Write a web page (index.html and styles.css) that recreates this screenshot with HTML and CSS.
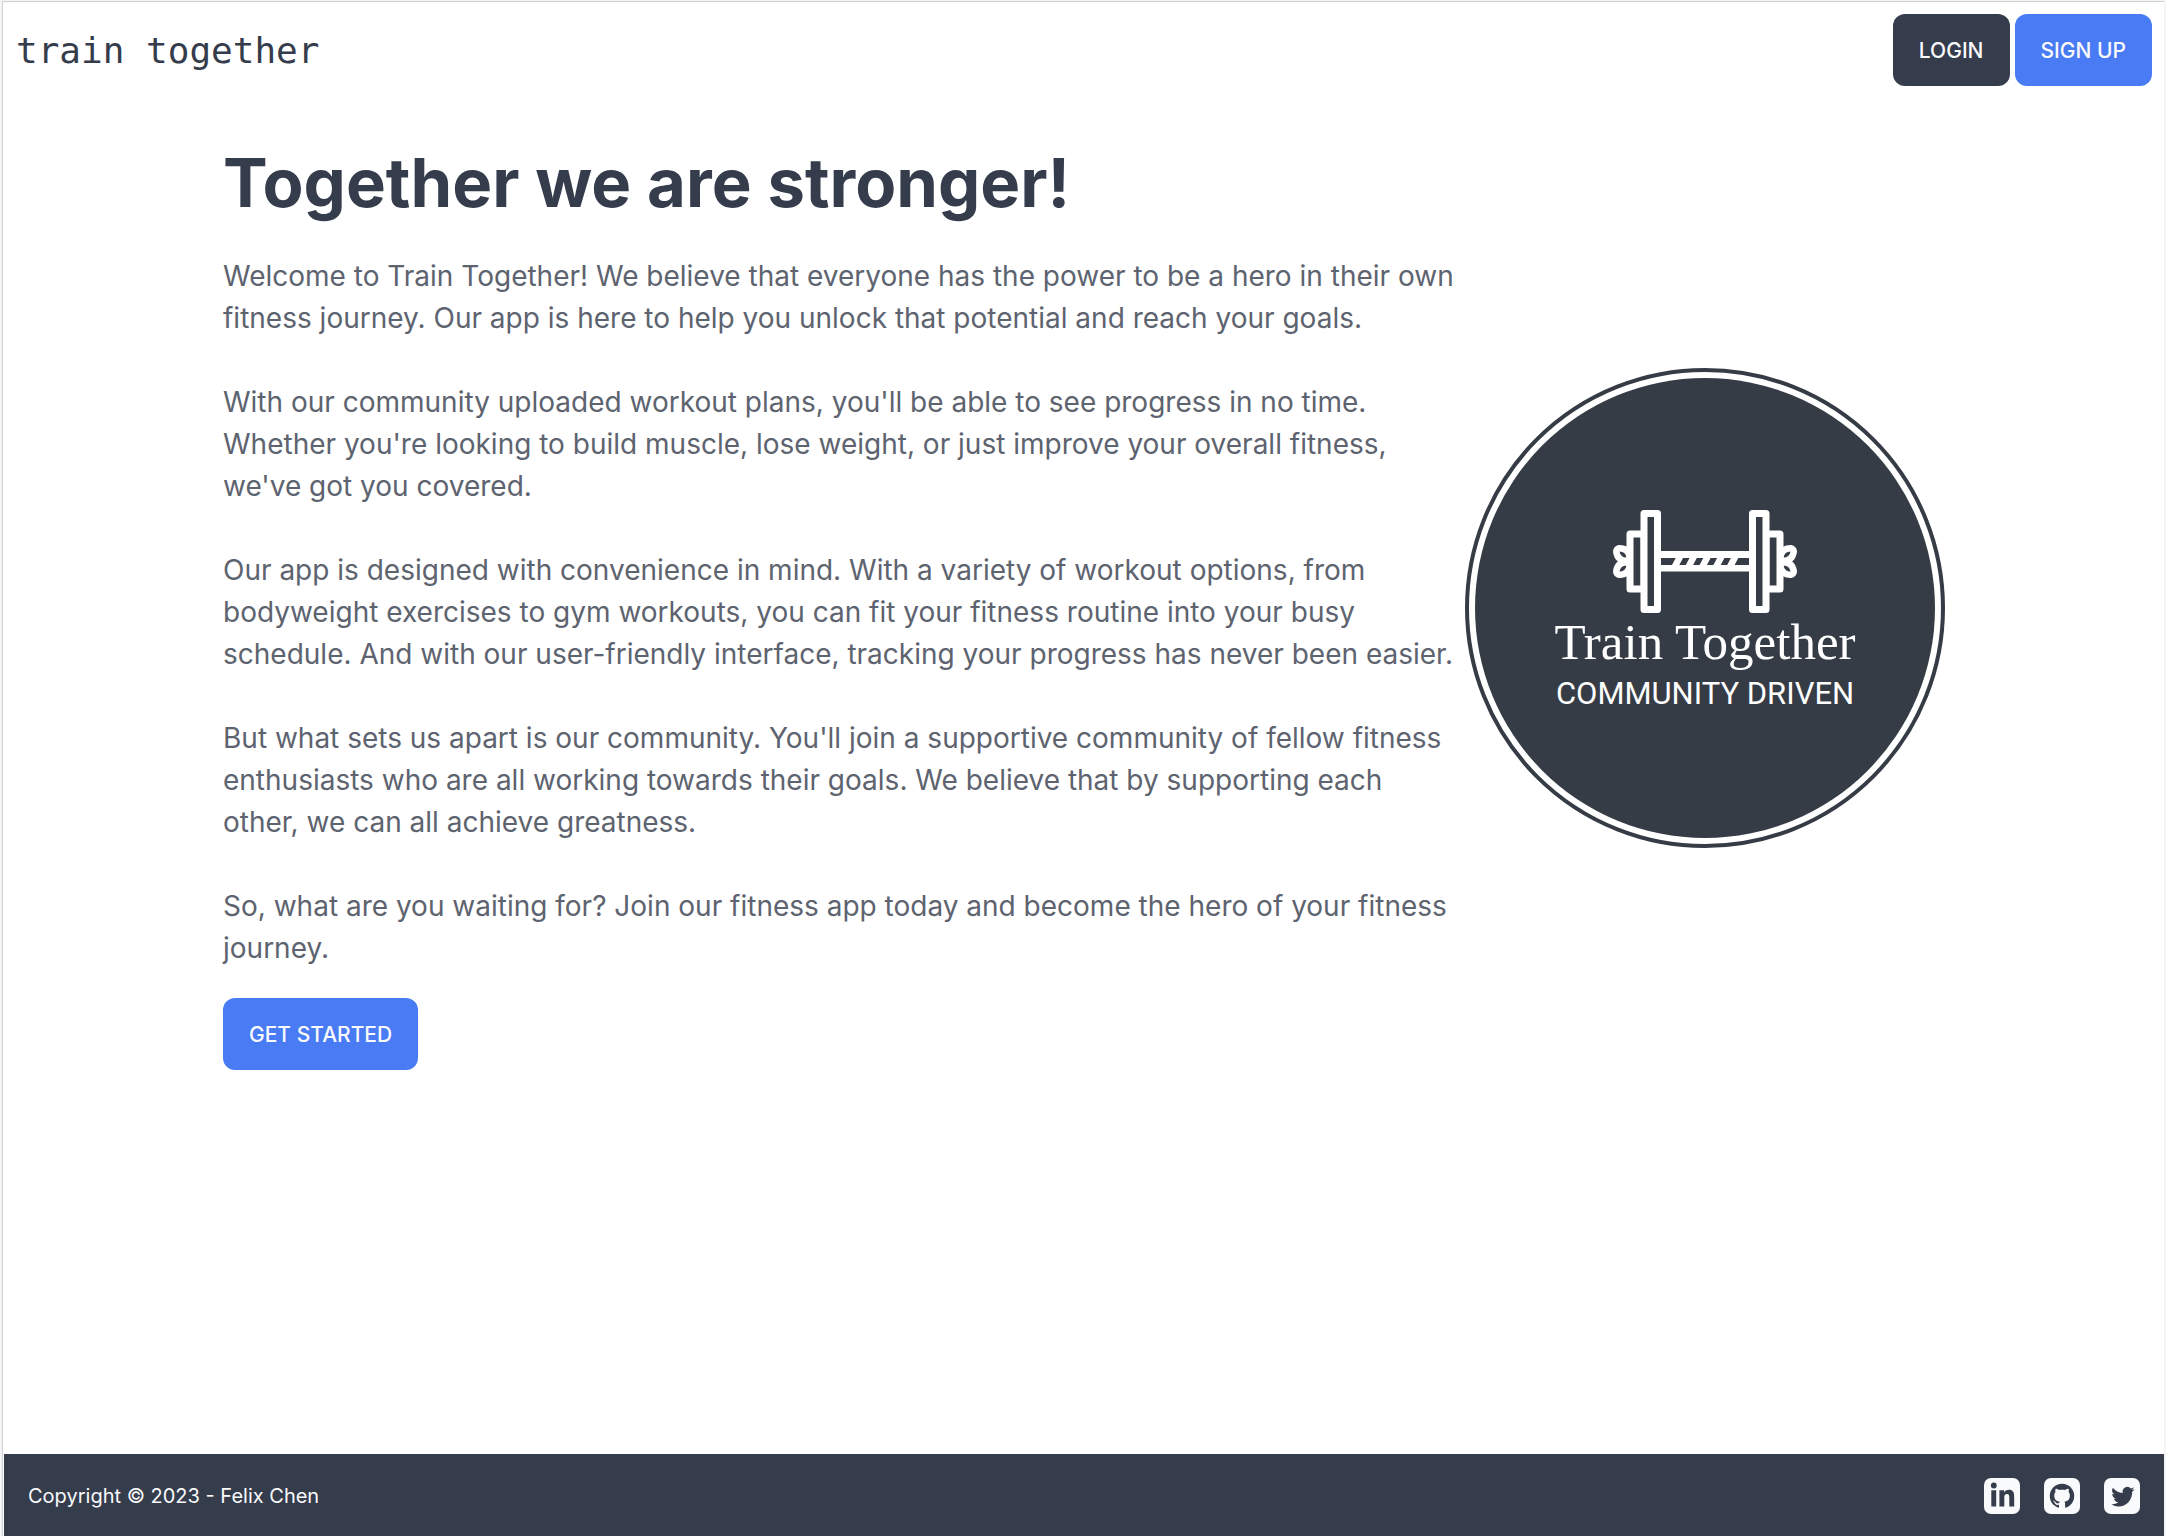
FILE: index.html
```html
<!DOCTYPE html>
<html lang="en">
<head>
  <meta charset="utf-8">
  <meta name="viewport" content="width=device-width, initial-scale=1">
  <title>Train Together</title>
  <link rel="stylesheet" href="styles.css">
</head>
<body>
  <div class="page">
    <header class="navbar">
      <a class="brand" href="#">train together</a>
      <nav class="nav-actions">
        <button class="btn btn-neutral" type="button">LOGIN</button>
        <button class="btn btn-primary" type="button">SIGN UP</button>
      </nav>
    </header>

    <main class="hero">
      <div class="hero-text">
        <h1 class="hero-title">Together we are stronger!</h1>
        <div class="hero-copy">
          <p>Welcome to Train Together! We believe that everyone has the power to be a hero in their own fitness journey. Our app is here to help you unlock that potential and reach your goals.</p>
          <p>With our community uploaded workout plans, you'll be able to see progress in no time. Whether you're looking to build muscle, lose weight, or just improve your overall fitness, we've got you covered.</p>
          <p>Our app is designed with convenience in mind. With a variety of workout options, from bodyweight exercises to gym workouts, you can fit your fitness routine into your busy schedule. And with our user-friendly interface, tracking your progress has never been easier.</p>
          <p>But what sets us apart is our community. You'll join a supportive community of fellow fitness enthusiasts who are all working towards their goals. We believe that by supporting each other, we can all achieve greatness.</p>
          <p>So, what are you waiting for? Join our fitness app today and become the hero of your fitness journey.</p>
        </div>
        <button class="btn btn-primary" type="button">GET STARTED</button>
      </div>

      <svg class="emblem" viewBox="0 0 480 480" role="img" aria-label="Train Together, community driven">
        <circle class="emblem-ring" cx="240" cy="240" r="238"/>
        <circle class="emblem-disc" cx="240" cy="240" r="230"/>
        <defs>
          <g id="weight">
            <path class="petal-edge" d="M154.500 183.500Q160.500 183.500 161.500 189.500Q155.500 189.500 154.500 183.500ZM154.500 203.500Q160.500 203.500 161.500 197.500Q155.500 197.500 154.500 203.500Z"/>
            <path class="petal-core" d="M154.500 183.500Q160.500 183.500 161.500 189.500Q155.500 189.500 154.500 183.500ZM154.500 203.500Q160.500 203.500 161.500 197.500Q155.500 197.500 154.500 203.500Z"/>
            <path class="plate" d="M179 166H165V221H179Z"/>
            <rect class="plate" x="179" y="145.500" width="13.500" height="96"/>
          </g>
        </defs>
        <rect class="bar" x="194" y="183" width="92" height="20.500"/>
        <path class="grip" d="M195.500 190H210.700L207 197H195.500ZM218 190H224.500L220.800 197H214.300ZM231.800 190H238.300L234.600 197H228.100ZM245.600 190H252.100L248.400 197H241.900ZM259.400 190H265.900L262.200 197H255.700ZM273.300 190H284.500V197H269.600Z"/>
        <use href="#weight"/>
        <use href="#weight" transform="matrix(-1 0 0 1 480 0)"/>
        <text class="emblem-name" x="240" y="291">Train Together</text>
        <text class="emblem-tag" x="240" y="336">COMMUNITY DRIVEN</text>
      </svg>
    </main>

    <footer class="footer">
      <p class="copyright">Copyright © 2023 - Felix Chen</p>
      <nav class="social">
        <a class="social-link" href="#" aria-label="LinkedIn">
          <svg viewBox="0 0 36 36"><circle cx="9.800" cy="7.500" r="2.900"/><path d="M7.300 12.200H12.200V28.500H7.300ZM15.400 12.200H20.100V14.400C21 12.800 22.700 11.800 24.800 11.800C29 11.800 30.200 14.500 30.200 18.700V28.500H25.300V19.700C25.300 17.600 25 16 22.900 16C20.900 16 20.300 17.500 20.300 19.600V28.500H15.400Z"/></svg>
        </a>
        <a class="social-link" href="#" aria-label="GitHub">
          <svg viewBox="0 0 36 36"><path transform="translate(5.800 5.800) scale(1.530)" d="M8 0C3.580 0 0 3.580 0 8c0 3.540 2.290 6.530 5.470 7.590.4.070.55-.17.55-.38 0-.19-.01-.82-.01-1.490-2.010.37-2.530-.49-2.690-.94-.09-.23-.48-.94-.82-1.130-.28-.15-.68-.52-.01-.53.63-.01 1.080.58 1.230.82.72 1.210 1.870.87 2.330.66.07-.52.28-.87.51-1.070-1.780-.2-3.640-.89-3.640-3.950 0-.87.31-1.590.82-2.150-.08-.2-.36-1.020.08-2.120 0 0 .67-.21 2.200.82.64-.18 1.320-.27 2-.27s1.360.09 2 .27c1.530-1.040 2.200-.82 2.200-.82.44 1.100.16 1.920.08 2.120.51.56.82 1.270.82 2.150 0 3.070-1.870 3.750-3.650 3.950.29.25.54.73.54 1.480 0 1.070-.01 1.930-.01 2.200 0 .21.15.46.55.38A8.010 8.010 0 0 0 16 8c0-4.420-3.580-8-8-8z"/></svg>
        </a>
        <a class="social-link" href="#" aria-label="Twitter">
          <svg viewBox="0 0 36 36"><path transform="translate(7.300 5.900) scale(1.450 1.500)" d="M5.026 15c6.038 0 9.341-5.003 9.341-9.334 0-.14 0-.282-.006-.422A6.685 6.685 0 0 0 16 3.542a6.658 6.658 0 0 1-1.889.518 3.301 3.301 0 0 0 1.447-1.817 6.533 6.533 0 0 1-2.087.793A3.286 3.286 0 0 0 7.875 6.030a9.325 9.325 0 0 1-6.767-3.429 3.289 3.289 0 0 0 1.018 4.382A3.323 3.323 0 0 1 .64 6.575v.045a3.288 3.288 0 0 0 2.632 3.218 3.203 3.203 0 0 1-.865.115 3.230 3.230 0 0 1-.614-.057 3.283 3.283 0 0 0 3.067 2.277A6.588 6.588 0 0 1 .78 13.580a6.320 6.320 0 0 1-.78-.045A9.344 9.344 0 0 0 5.026 15z"/></svg>
        </a>
      </nav>
    </footer>
  </div>
</body>
</html>
```
FILE: styles.css
```css
:root {
  --ink: #353c4c;
  --copy: #5d636f;
  --blue: #497bf4;
  --disc: #363c46;
}

* {
  box-sizing: border-box;
}

body {
  margin: 0;
  padding: 1px 2px 0;
  min-height: 100vh;
  display: flex;
  background: #f5f5f7;
  color: var(--ink);
  font-family: Inter, "Liberation Sans", sans-serif;
}

.page {
  flex: 1;
  display: flex;
  flex-direction: column;
  background: #fff;
  border-top: 1px solid #d0d0d0;
  border-left: 1px solid #d0d0d0;
  padding-left: 1px;
}

.navbar {
  display: flex;
  align-items: center;
  justify-content: space-between;
  padding: 12px;
}

.brand {
  color: var(--ink);
  padding-top: 2px;
  font: 36px/48px "DejaVu Sans Mono", monospace;
  text-decoration: none;
}

.nav-actions {
  display: flex;
  gap: 5px;
}

.btn {
  height: 72px;
  padding: 2px 26px 0;
  border: 0;
  border-radius: 12px;
  color: #f9fafb;
  font: 500 21px/24px Inter, "Liberation Sans", sans-serif;
  cursor: pointer;
}

.btn-neutral {
  background: var(--ink);
}

.btn-primary {
  background: var(--blue);
}

.hero {
  flex: 1;
  display: grid;
  grid-template-columns: minmax(0, 1fr) 480px;
  align-content: start;
  align-items: center;
  gap: 6px;
  width: 100%;
  max-width: 1770px;
  margin: 0 auto;
  padding: 48px 24px;
}

.hero-title {
  margin: 0;
  font-size: 67px;
  line-height: 74px;
  font-weight: 700;
}

.hero-copy {
  display: grid;
  gap: 42px;
  padding: 35px 0 29px;
  color: var(--copy);
  font-size: 28px;
  line-height: 42px;
}

.hero-copy p {
  margin: 0;
}

.emblem {
  width: 100%;
  height: auto;
}

.emblem-ring {
  fill: #fff;
  stroke: var(--disc);
  stroke-width: 4px;
}

.emblem-disc,
.petal-core,
.grip {
  fill: var(--disc);
}

.bar {
  fill: #fff;
}

.plate {
  fill: var(--disc);
  stroke: #fff;
  stroke-width: 7px;
  stroke-linejoin: round;
}

.petal-edge {
  fill: #fff;
  stroke: #fff;
  stroke-width: 13px;
  stroke-linejoin: round;
}

.emblem-name,
.emblem-tag {
  fill: #fff;
  text-anchor: middle;
}

.emblem-name {
  font: 51px "Liberation Serif", serif;
}

.emblem-tag {
  font: 31px Roboto, sans-serif;
}

.footer {
  display: flex;
  align-items: center;
  justify-content: space-between;
  padding: 24px 24px 22px;
  background: var(--ink);
  color: #f9fafb;
}

.copyright {
  margin: 0;
  font-size: 20px;
  line-height: 36px;
}

.social {
  display: flex;
  gap: 24px;
}

.social-link {
  width: 36px;
  height: 36px;
  border-radius: 7px;
  background: #f9fafb;
}

.social-link svg {
  display: block;
  fill: var(--ink);
}
```
